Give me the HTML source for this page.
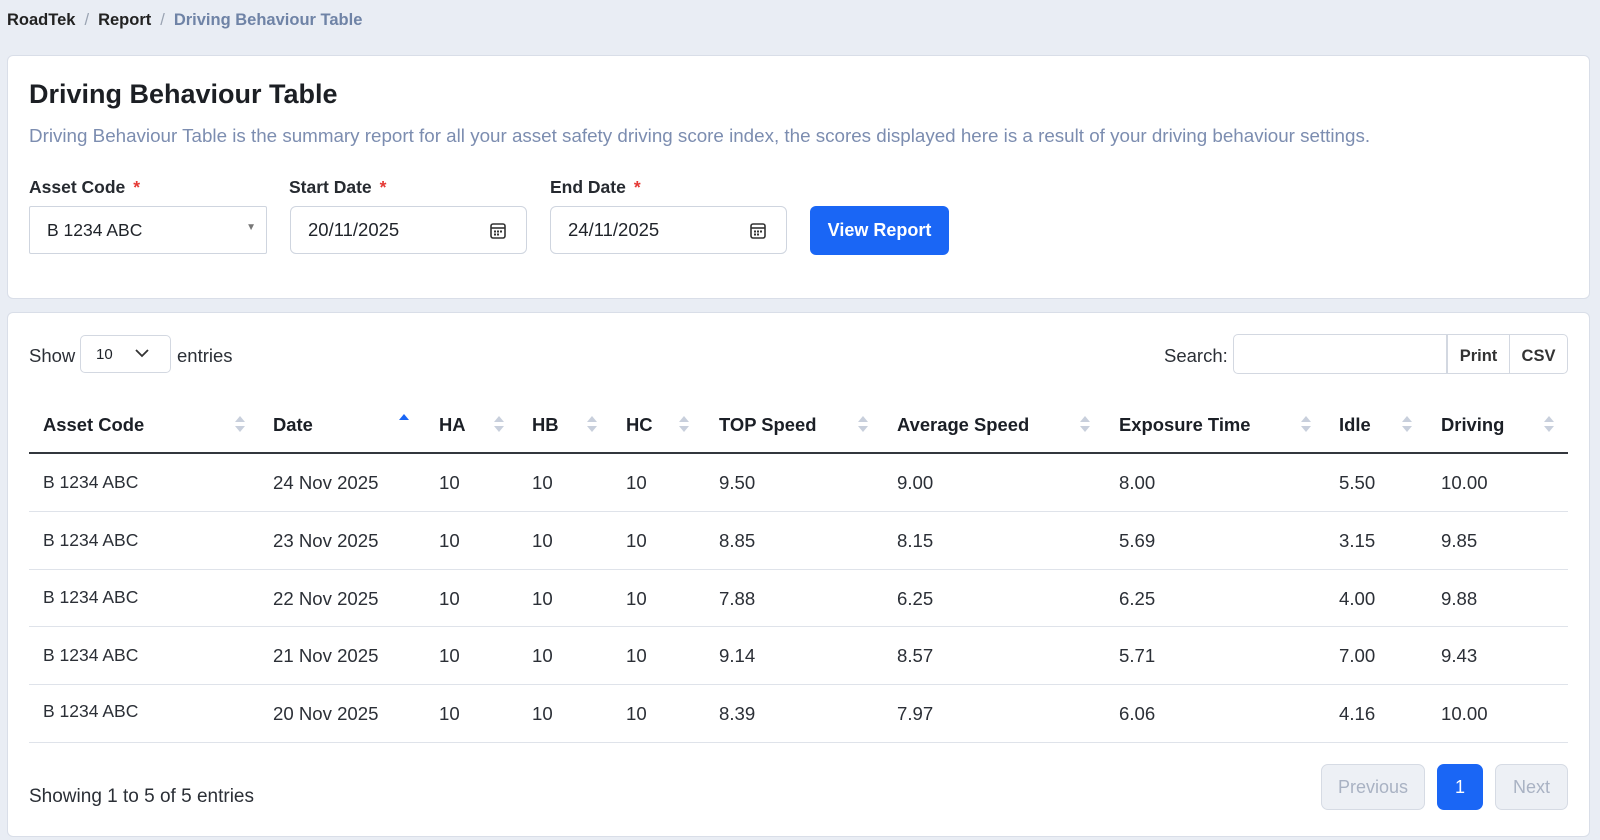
<!DOCTYPE html>
<html><head><meta charset="utf-8"><style>
*{box-sizing:border-box;margin:0;padding:0}
body{width:1600px;height:840px;background:#e9edf4;font-family:"Liberation Sans",sans-serif;color:#1f2329;position:relative;overflow:hidden}
.abs{position:absolute}
.bc{left:7px;top:11px;font-size:16.5px;font-weight:bold;color:#222}
.bc span.s{color:#9aa3b2;margin:0 9px;font-weight:normal}
.bc .cur{color:#6f83a6}
.card{background:#fff;border:1px solid #d9dee8;border-radius:6px}
.lbl{font-size:17.5px;font-weight:bold;color:#262a30}
.lbl b{color:#e53935;margin-left:8px}
.inp{border:1px solid #cfd5df;border-radius:6px;height:48px;font-size:18.5px;padding-left:17px;line-height:46px;background:#fff}
.th{top:414px;font-size:18.4px;font-weight:bold;color:#1b1f26}
.td{font-size:18.6px;color:#2b2f36}
.sort{width:10px;height:18px}
.hl{left:29px;width:1539px;height:1px;background:#dfe3ea}
.pg{border:1px solid #d6dbe4;border-radius:7px;background:#edf0f5;color:#a9b2c3;font-size:18px;text-align:center;line-height:44px;height:46px}
</style></head><body>
<div class="abs bc">RoadTek<span class="s">/</span>Report<span class="s">/</span><span class="cur">Driving Behaviour Table</span></div>

<div class="abs card" style="left:7px;top:55px;width:1583px;height:244px"></div>
<div class="abs" style="left:29px;top:79px;font-size:27px;font-weight:bold;color:#1c1f24">Driving Behaviour Table</div>
<div class="abs" style="left:29px;top:125px;font-size:18.8px;color:#7c8db0;white-space:nowrap">Driving Behaviour Table is the summary report for all your asset safety driving score index, the scores displayed here is a result of your driving behaviour settings.</div>
<div class="abs lbl" style="left:29px;top:177px">Asset Code<b>*</b></div>
<div class="abs lbl" style="left:289px;top:177px">Start Date<b>*</b></div>
<div class="abs lbl" style="left:550px;top:177px">End Date<b>*</b></div>
<div class="abs inp" style="left:29px;top:206px;width:238px;border-radius:2px;font-size:17.5px">B 1234 ABC<span class="abs" style="right:10px;top:-2px;font-size:10px;color:#777">▼</span></div>
<div class="abs inp" style="left:290px;top:206px;width:237px">20/11/2025</div>
<div class="abs inp" style="left:550px;top:206px;width:237px">24/11/2025</div>
<svg class="abs" style="left:489px;top:222px" width="18" height="18" viewBox="0 0 18 18"><rect x="2" y="2" width="14" height="14" rx="2" fill="none" stroke="#333" stroke-width="1.6"/><line x1="2" y1="6" x2="16" y2="6" stroke="#333" stroke-width="1.6"/><g fill="#333"><rect x="5" y="8.5" width="2" height="2"/><rect x="8" y="8.5" width="2" height="2"/><rect x="11" y="8.5" width="2" height="2"/><rect x="5" y="11.5" width="2" height="2"/><rect x="8" y="11.5" width="2" height="2"/></g></svg>
<svg class="abs" style="left:749px;top:222px" width="18" height="18" viewBox="0 0 18 18"><rect x="2" y="2" width="14" height="14" rx="2" fill="none" stroke="#333" stroke-width="1.6"/><line x1="2" y1="6" x2="16" y2="6" stroke="#333" stroke-width="1.6"/><g fill="#333"><rect x="5" y="8.5" width="2" height="2"/><rect x="8" y="8.5" width="2" height="2"/><rect x="11" y="8.5" width="2" height="2"/><rect x="5" y="11.5" width="2" height="2"/><rect x="8" y="11.5" width="2" height="2"/></g></svg>
<div class="abs" style="left:810px;top:206px;width:139px;height:49px;background:#1a66f5;border-radius:6px;color:#fff;font-weight:bold;font-size:18px;text-align:center;line-height:49px">View Report</div>

<div class="abs card" style="left:7px;top:312px;width:1583px;height:525px"></div>
<div class="abs td" style="left:29px;top:345px;font-size:18.5px">Show</div>
<div class="abs" style="left:80px;top:335px;width:91px;height:38px;border:1px solid #d3d8e1;border-radius:5px;font-size:15px;padding-left:15px;line-height:38px">10
<svg class="abs" style="left:54px;top:13px" width="14" height="9" viewBox="0 0 14 9"><path d="M1 1l6 6 6-6" fill="none" stroke="#333" stroke-width="1.8"/></svg></div>
<div class="abs td" style="left:177px;top:345px;font-size:18.5px">entries</div>
<div class="abs td" style="left:1164px;top:345px;font-size:18.5px">Search:</div>
<div class="abs" style="left:1233px;top:334px;width:214px;height:40px;border:1px solid #d3d8e1;border-radius:5px 0 0 5px"></div>
<div class="abs" style="left:1447px;top:334px;width:63px;height:40px;border:1px solid #d3d8e1;font-size:16.5px;font-weight:bold;color:#333;text-align:center;line-height:42px">Print</div>
<div class="abs" style="left:1509px;top:334px;width:59px;height:40px;border:1px solid #d3d8e1;border-radius:0 5px 5px 0;font-size:16.5px;font-weight:bold;color:#333;text-align:center;line-height:42px">CSV</div>

<div class="abs th" style="left:43px">Asset Code</div>
<div class="abs th" style="left:273px">Date</div>
<div class="abs th" style="left:439px">HA</div>
<div class="abs th" style="left:532px">HB</div>
<div class="abs th" style="left:626px">HC</div>
<div class="abs th" style="left:719px">TOP Speed</div>
<div class="abs th" style="left:897px">Average Speed</div>
<div class="abs th" style="left:1119px">Exposure Time</div>
<div class="abs th" style="left:1339px">Idle</div>
<div class="abs th" style="left:1441px">Driving</div>
<svg class="abs sort" style="left:235px;top:415px" viewBox="0 0 10 18"><path d="M0 7L5 1l5 6z" fill="#c8cfdc"/><path d="M0 11l5 6 5-6z" fill="#c8cfdc"/></svg>
<svg class="abs sort" style="left:399px;top:413px" viewBox="0 0 10 18"><path d="M0 7L5 1l5 6z" fill="#1a66f5"/></svg>
<svg class="abs sort" style="left:494px;top:415px" viewBox="0 0 10 18"><path d="M0 7L5 1l5 6z" fill="#c8cfdc"/><path d="M0 11l5 6 5-6z" fill="#c8cfdc"/></svg>
<svg class="abs sort" style="left:587px;top:415px" viewBox="0 0 10 18"><path d="M0 7L5 1l5 6z" fill="#c8cfdc"/><path d="M0 11l5 6 5-6z" fill="#c8cfdc"/></svg>
<svg class="abs sort" style="left:679px;top:415px" viewBox="0 0 10 18"><path d="M0 7L5 1l5 6z" fill="#c8cfdc"/><path d="M0 11l5 6 5-6z" fill="#c8cfdc"/></svg>
<svg class="abs sort" style="left:858px;top:415px" viewBox="0 0 10 18"><path d="M0 7L5 1l5 6z" fill="#c8cfdc"/><path d="M0 11l5 6 5-6z" fill="#c8cfdc"/></svg>
<svg class="abs sort" style="left:1080px;top:415px" viewBox="0 0 10 18"><path d="M0 7L5 1l5 6z" fill="#c8cfdc"/><path d="M0 11l5 6 5-6z" fill="#c8cfdc"/></svg>
<svg class="abs sort" style="left:1301px;top:415px" viewBox="0 0 10 18"><path d="M0 7L5 1l5 6z" fill="#c8cfdc"/><path d="M0 11l5 6 5-6z" fill="#c8cfdc"/></svg>
<svg class="abs sort" style="left:1402px;top:415px" viewBox="0 0 10 18"><path d="M0 7L5 1l5 6z" fill="#c8cfdc"/><path d="M0 11l5 6 5-6z" fill="#c8cfdc"/></svg>
<svg class="abs sort" style="left:1544px;top:415px" viewBox="0 0 10 18"><path d="M0 7L5 1l5 6z" fill="#c8cfdc"/><path d="M0 11l5 6 5-6z" fill="#c8cfdc"/></svg>
<div class="abs" style="left:29px;top:452px;width:1539px;height:2px;background:#33373d"></div>

<div class="abs td" style="left:43px;top:472px;font-size:17.5px">B 1234 ABC</div><div class="abs td" style="left:273px;top:472px">24 Nov 2025</div><div class="abs td" style="left:439px;top:472px">10</div><div class="abs td" style="left:532px;top:472px">10</div><div class="abs td" style="left:626px;top:472px">10</div><div class="abs td" style="left:719px;top:472px">9.50</div><div class="abs td" style="left:897px;top:472px">9.00</div><div class="abs td" style="left:1119px;top:472px">8.00</div><div class="abs td" style="left:1339px;top:472px">5.50</div><div class="abs td" style="left:1441px;top:472px">10.00</div>
<div class="abs hl" style="top:511px"></div>
<div class="abs td" style="left:43px;top:530px;font-size:17.5px">B 1234 ABC</div><div class="abs td" style="left:273px;top:530px">23 Nov 2025</div><div class="abs td" style="left:439px;top:530px">10</div><div class="abs td" style="left:532px;top:530px">10</div><div class="abs td" style="left:626px;top:530px">10</div><div class="abs td" style="left:719px;top:530px">8.85</div><div class="abs td" style="left:897px;top:530px">8.15</div><div class="abs td" style="left:1119px;top:530px">5.69</div><div class="abs td" style="left:1339px;top:530px">3.15</div><div class="abs td" style="left:1441px;top:530px">9.85</div>
<div class="abs hl" style="top:569px"></div>
<div class="abs td" style="left:43px;top:587px;font-size:17.5px">B 1234 ABC</div><div class="abs td" style="left:273px;top:588px">22 Nov 2025</div><div class="abs td" style="left:439px;top:588px">10</div><div class="abs td" style="left:532px;top:588px">10</div><div class="abs td" style="left:626px;top:588px">10</div><div class="abs td" style="left:719px;top:588px">7.88</div><div class="abs td" style="left:897px;top:588px">6.25</div><div class="abs td" style="left:1119px;top:588px">6.25</div><div class="abs td" style="left:1339px;top:588px">4.00</div><div class="abs td" style="left:1441px;top:588px">9.88</div>
<div class="abs hl" style="top:626px"></div>
<div class="abs td" style="left:43px;top:645px;font-size:17.5px">B 1234 ABC</div><div class="abs td" style="left:273px;top:645px">21 Nov 2025</div><div class="abs td" style="left:439px;top:645px">10</div><div class="abs td" style="left:532px;top:645px">10</div><div class="abs td" style="left:626px;top:645px">10</div><div class="abs td" style="left:719px;top:645px">9.14</div><div class="abs td" style="left:897px;top:645px">8.57</div><div class="abs td" style="left:1119px;top:645px">5.71</div><div class="abs td" style="left:1339px;top:645px">7.00</div><div class="abs td" style="left:1441px;top:645px">9.43</div>
<div class="abs hl" style="top:684px"></div>
<div class="abs td" style="left:43px;top:701px;font-size:17.5px">B 1234 ABC</div><div class="abs td" style="left:273px;top:703px">20 Nov 2025</div><div class="abs td" style="left:439px;top:703px">10</div><div class="abs td" style="left:532px;top:703px">10</div><div class="abs td" style="left:626px;top:703px">10</div><div class="abs td" style="left:719px;top:703px">8.39</div><div class="abs td" style="left:897px;top:703px">7.97</div><div class="abs td" style="left:1119px;top:703px">6.06</div><div class="abs td" style="left:1339px;top:703px">4.16</div><div class="abs td" style="left:1441px;top:703px">10.00</div>
<div class="abs hl" style="top:742px"></div>

<div class="abs td" style="left:29px;top:786px;font-size:19px">Showing 1 to 5 of 5 entries</div>
<div class="abs pg" style="left:1321px;top:764px;width:104px">Previous</div>
<div class="abs pg" style="left:1437px;top:764px;width:46px;background:#1a66f5;border-color:#1a66f5;color:#fff">1</div>
<div class="abs pg" style="left:1495px;top:764px;width:73px">Next</div>
</body></html>
